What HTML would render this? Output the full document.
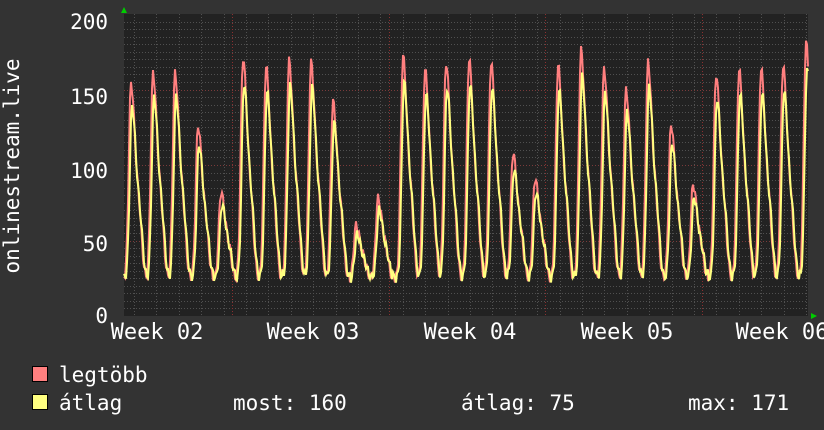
<!DOCTYPE html>
<html><head><meta charset="utf-8"><style>
html,body{margin:0;padding:0;background:#333;}
svg{display:block}
text{font-family:"DejaVu Sans Mono","Liberation Mono",monospace;fill:#fff;}
</style></head><body>
<svg id="g" width="824" height="430" xmlns="http://www.w3.org/2000/svg">
<rect width="824" height="430" fill="#333"/>
<rect x="124" y="14" width="684" height="302" fill="#222"/>
<g id="grid"></g>
<g id="lines"></g>
<polygon points="121,13 127,13 124,7" fill="#0c0"/>
<polygon points="811,313 811,319 817,316" fill="#0c0"/>
<g font-size="21" text-anchor="end">
<text x="108" y="29">200</text>
<text x="108" y="104">150</text>
<text x="108" y="178">100</text>
<text x="108" y="251">50</text>
<text x="108" y="323">0</text>
</g>
<g font-size="22" text-anchor="middle">
<text x="157" y="339">Week 02</text>
<text x="313" y="339">Week 03</text>
<text x="470" y="339">Week 04</text>
<text x="627" y="339">Week 05</text>
<text x="782" y="339">Week 06</text>
</g>
<text font-size="21" transform="translate(19,166) rotate(-90)" text-anchor="middle">onlinestream.live</text>
<rect x="32.5" y="366.5" width="15" height="15" fill="#ff7f7f" stroke="#000"/>
<rect x="32.5" y="394.5" width="15" height="15" fill="#ffff80" stroke="#000"/>
<g font-size="21">
<text x="59" y="382">legtöbb</text>
<text x="59" y="410">átlag</text>
<text x="233" y="410">most: 160</text>
<text x="461" y="410">átlag: 75</text>
<text x="688" y="410">max: 171</text>
</g>
</svg>
<script>
var NS="http://www.w3.org/2000/svg";
var grid=document.getElementById('grid'),lines=document.getElementById('lines');
function ln(x1,y1,x2,y2,c,d){var l=document.createElementNS(NS,'line');l.setAttribute('x1',x1);l.setAttribute('y1',y1);l.setAttribute('x2',x2);l.setAttribute('y2',y2);l.setAttribute('stroke',c);l.setAttribute('stroke-width',1);if(d)l.setAttribute('stroke-dasharray',d);grid.appendChild(l);}
var sc=302/200;
for(var v=5;v<200;v+=5){var y=Math.round(316-v*sc)+0.5;ln(124,y,808,y,(v%50==0)?'#7a3b3b':'#505050','1,2');}
for(var x=124+10;x<808;x+=22.4){var xx=Math.round(x)+0.5;ln(xx,14,xx,316,'#505050','1,2');}
[232,389,545,702].forEach(function(x){ln(x+0.5,14,x+0.5,316,'#8a3030','1,2');});
var peaks=[[131,154],[153,161],[175,161],[198,126],[221,82],[243,171],[266,165],[289,169],[311,168],[333,142],[356,60],[378,78],[403,172],[425,163],[446,168],[469,170],[491,168],[513,108],[535,91],[558,166],[581,176],[604,164],[626,150],[648,168],[671,127],[693,87],[716,160],[739,163],[761,164],[783,166],[806,181]];
function val(x,k){var s=24+((x*7)%5);for(var i=0;i<peaks.length;i++){var p=peaks[i],dx=x-p[0];var w=dx<0?3.2:6.5;var P=p[1]*k;var g=Math.exp(-Math.pow(dx/w,2));var sh=Math.exp(-Math.pow((dx-8)/4,2))*0.25;s=Math.max(s,24+(P-24)*(g+sh*(1-g)));}
return s+Math.sin(x*1.7)*3;}
function poly(k,c,off){var pts=[];for(var x=124;x<=808;x++){var v=val(x+off,k);pts.push(x+','+(316-v*sc).toFixed(1));}
var p=document.createElementNS(NS,'polyline');p.setAttribute('points',pts.join(' '));p.setAttribute('fill','none');p.setAttribute('stroke',c);p.setAttribute('stroke-width',2);lines.appendChild(p);}
poly(1,'#ff7f7f',0);poly(0.9,'#ffff80',-1);
</script>
</body></html>
